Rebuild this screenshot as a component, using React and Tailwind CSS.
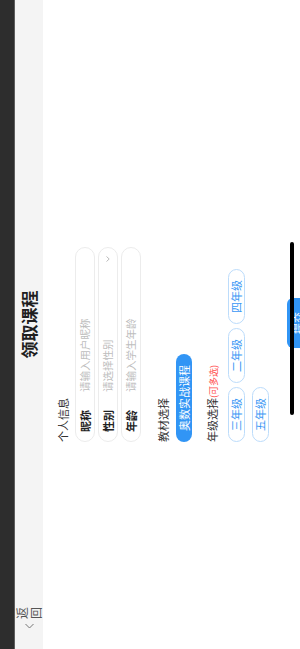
export default function App() {
  const rows = [
    { label: "昵称", ph: "请输入用户昵称", chevron: false },
    { label: "性别", ph: "请选择性别", chevron: true },
    { label: "年龄", ph: "请输入学生年龄", chevron: false },
  ];
  const grades = ["三年级", "二年级", "四年级", "五年级"];
  return (
    <div className="w-[300px] h-[649px] overflow-hidden bg-white font-['Noto_Sans_CJK_SC','Noto_Sans',sans-serif]">
      <div className="w-[649px] h-[300px] origin-top-left translate-y-[649px] -rotate-90 bg-white relative flex flex-col overflow-hidden">
        <div className="h-[14px] bg-[#2d2d2d] shrink-0" />
        <div className="h-px bg-[#5e5e5e] shrink-0" />
        <div className="h-[28px] bg-[#f4f4f4] shrink-0 grid grid-cols-[1fr_auto_1fr] items-center">
          <div className="flex items-center pl-[20px] gap-[4px]">
            <svg width="6" height="9" viewBox="0 0 6 9" fill="none">
              <path d="M5 0.5 L1 4.5 L5 8.5" stroke="#777" strokeWidth="1" />
            </svg>
            <div className="flex flex-col text-[12px] leading-[14px] text-[#555]">
              <span>返</span>
              <span>回</span>
            </div>
          </div>
          <div className="text-[17px] leading-[20px] font-bold text-[#1f1f1f]">领取课程</div>
          <div />
        </div>

        <div className="pl-[207px] pt-[13px] flex flex-col">
          <div className="text-[11px] leading-[14px] text-[#333]">个人信息</div>
          <div className="mt-[5px] w-[195px] flex flex-col gap-[3px]">
            {rows.map((r) => (
              <div
                key={r.label}
                className="h-[20px] rounded-full border border-[#ececec] flex items-center pl-[9px] pr-[8px]"
              >
                <span className="w-[40px] text-[11px] leading-[14px] font-bold text-[#222]">{r.label}</span>
                <span className="flex-1 text-[10.5px] leading-[14px] text-[#bdbdbd]">{r.ph}</span>
                {r.chevron && (
                  <svg width="6" height="4" viewBox="0 0 6 4" fill="none">
                    <path d="M0.5 0.5 L3 3.2 L5.5 0.5" stroke="#aaa" strokeWidth="0.8" />
                  </svg>
                )}
              </div>
            ))}
          </div>

          <div className="mt-[15px] text-[11px] leading-[14px] text-[#333]">教材选择</div>
          <div className="mt-[6px] flex">
            <div className="h-[16px] px-[11px] rounded-full bg-[#3195f5] text-white text-[11px] leading-[16px]">
              奥数实战课程
            </div>
          </div>

          <div className="mt-[13px] flex items-baseline text-[11px] leading-[14px] text-[#333]">
            <span>年级选择</span>
            <span className="text-[9px] text-[#ff5050]">(可多选)</span>
          </div>
          <div className="mt-[7px] grid grid-cols-[55px_55px_55px] gap-x-[4px] gap-y-[7px]">
            {grades.map((g) => (
              <div
                key={g}
                className="h-[17px] rounded-full border border-[#bcdcfb] text-[#3a97f5] text-[11px] leading-[15px] flex items-center justify-center"
              >
                {g}
              </div>
            ))}
          </div>
        </div>

        <div className="mt-[18px] flex justify-center pl-[3px]">
          <div className="w-[50px] h-[30px] rounded-[6px] bg-[#3195f5] text-white text-[11px] leading-[14px] flex justify-center pt-[4px]">
            提交
          </div>
        </div>

        <div className="absolute top-[290px] left-[234px] w-[173px] h-[4px] rounded-full bg-black" />
      </div>
    </div>
  );
}
